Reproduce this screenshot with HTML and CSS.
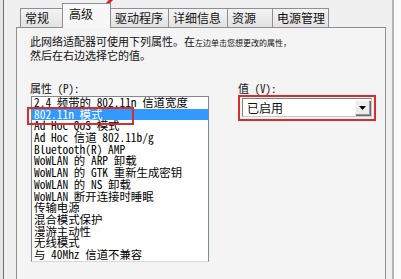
FILE: index.html
```html
<!DOCTYPE html>
<html>
<head>
<meta charset="utf-8">
<link rel="stylesheet" href="styles.css">
</head>
<body>
<div class="win">
  <div class="dlg">
    <div class="tabs">
      <div class="tab t1">常规</div>
      <div class="tab t2 active">高级</div>
      <div class="tab t3">驱动程序</div>
      <div class="tab t4">详细信息</div>
      <div class="tab t5">资源</div>
      <div class="tab t6">电源管理</div>
    </div>
    <div class="panel">
      <p class="desc">此网络适配器可使用下列属性。在<span class="desc-small">左边单击您想更改的属性，</span><br>然后在右边选择它的值。</p>
      <div class="cols">
        <div class="col-left">
          <div class="label">属性 (P):</div>
          <ul class="list">
            <li>2.4 频带的 802.11n 信道宽度</li>
            <li class="sel">802.11n 模式</li>
            <li>Ad Hoc QoS 模式</li>
            <li>Ad Hoc 信道 802.11b/g</li>
            <li>Bluetooth(R) AMP</li>
            <li>WoWLAN 的 ARP 卸载</li>
            <li>WoWLAN 的 GTK 重新生成密钥</li>
            <li>WoWLAN 的 NS 卸载</li>
            <li>WoWLAN 断开连接时睡眠</li>
            <li>传输电源</li>
            <li>混合模式保护</li>
            <li>漫游主动性</li>
            <li>无线模式</li>
            <li>与 40Mhz 信道不兼容</li>
          </ul>
          <div class="mark-item"></div>
        </div>
        <div class="col-right">
          <div class="label">值 (V):</div>
          <div class="mark-combo">
            <div class="combo">
              <span class="combo-text">已启用</span>
              <span class="combo-btn"><svg width="7" height="4" viewBox="0 0 7 4"><polygon points="0,0 7,0 3.5,4" fill="#000"/></svg></span>
            </div>
          </div>
        </div>
      </div>
    </div>
  </div>
  <div class="outside"></div>
  <svg class="arrow" width="14" height="8" viewBox="0 0 14 8"><line x1="3" y1="7" x2="12" y2="-2" stroke="#e0201c" stroke-width="3"/></svg>
</div>
</body>
</html>
```

FILE: styles.css
```css
html, body {
  margin: 0;
  padding: 0;
  background: #f0f0f0;
}

.win {
  position: relative;
  width: 401px;
  height: 279px;
  overflow: hidden;
  display: flex;
  padding-left: 3px;
  box-sizing: border-box;
  background: #e6e6e6;
  font-family: "Noto Sans CJK SC", "Liberation Sans", sans-serif;
  color: #111;
}

.dlg {
  width: 391px;
  height: 279px;
  box-sizing: border-box;
  display: flex;
  flex-direction: column;
  padding: 3px 7px 0 12px;
  border-left: 1px solid #6e6e6e;
  border-right: 2px solid #b4b4b4;
  background: #f0f0f0;
}

.tabs {
  display: flex;
  align-items: flex-end;
  height: 24px;
  padding-left: 4px;
}

.tab {
  box-sizing: border-box;
  height: 19px;
  margin-right: -1px;
  padding-left: 4px;
  display: flex;
  align-items: center;
  border: 1px solid #8d8f94;
  border-bottom: none;
  background: linear-gradient(#f4f4f4, #e2e2e2);
  font-size: 12px;
  line-height: 1;
  white-space: nowrap;
}

.tab.active {
  position: relative;
  z-index: 1;
  height: 25px;
  margin-bottom: -1px;
  padding-left: 6px;
  padding-bottom: 4px;
  background: #f7f7f7;
}

.t1 { width: 43px; }
.t2 { width: 49px; }
.t3 { width: 59px; }
.t4 { width: 60px; }
.t5 { width: 46px; }
.t6 { width: 57px; }

.panel {
  flex: 1;
  width: 370px;
  box-sizing: border-box;
  border: 1px solid #8d8f94;
  border-bottom: none;
  background: #f4f4f4;
  padding: 7px 0 0 13px;
}

.desc {
  margin: 0;
  font-size: 11px;
  line-height: 13px;
  white-space: nowrap;
}

.desc-small {
  font-size: 8px;
}

.cols {
  display: flex;
  margin-top: 20px;
}

.col-left {
  position: relative;
  width: 179px;
}

.label {
  font-family: "Noto Sans Mono CJK SC", "Liberation Mono", "Noto Sans CJK SC", monospace;
  font-size: 11px;
  line-height: 13px;
  white-space: nowrap;
}

.list {
  list-style: none;
  margin: 1px 0 0 1px;
  padding: 0;
  width: 178px;
  height: 166px;
  box-sizing: border-box;
  border: 1px solid #828790;
  border-bottom-color: #d8d8d8;
  background: #fff;
  overflow: hidden;
}

.list li {
  height: 11.7px;
  line-height: 11.7px;
  padding-left: 2px;
  font-family: "Noto Sans Mono CJK SC", "Liberation Mono", "Noto Sans CJK SC", monospace;
  font-size: 11.4px;
  white-space: nowrap;
  color: #000;
}

.list li.sel {
  background: #3399ff;
  color: #fff;
}

.mark-item {
  position: absolute;
  left: -3px;
  top: 25px;
  width: 107px;
  height: 18px;
  box-sizing: border-box;
  border: 2px solid #d32f2f;
}

.col-right {
  margin-left: 29px;
}

.mark-combo {
  width: 138px;
  box-sizing: border-box;
  border: 2px solid #d32f2f;
  padding: 1px 2px 2px 2px;
}

.combo {
  box-sizing: border-box;
  width: 130px;
  height: 19px;
  display: flex;
  align-items: center;
  justify-content: space-between;
  border: 1px solid #7f7f7f;
  border-right-color: #c8c8c8;
  border-bottom-color: #c8c8c8;
  background: #fff;
  padding: 1px;
}

.combo-text {
  padding-left: 3px;
  font-size: 12px;
  line-height: 1;
}

.combo-btn {
  box-sizing: border-box;
  width: 15px;
  height: 15px;
  display: flex;
  align-items: center;
  justify-content: center;
  background: #ececec;
  border: 1px solid #9a9a9a;
  border-top-color: #f8f8f8;
  border-left-color: #f8f8f8;
  box-shadow: 1px 1px 0 #6a6a6a;
}

.outside {
  flex: 1;
  background: #fafafa;
}

.arrow {
  position: absolute;
  left: 101px;
  top: 0;
}
```
